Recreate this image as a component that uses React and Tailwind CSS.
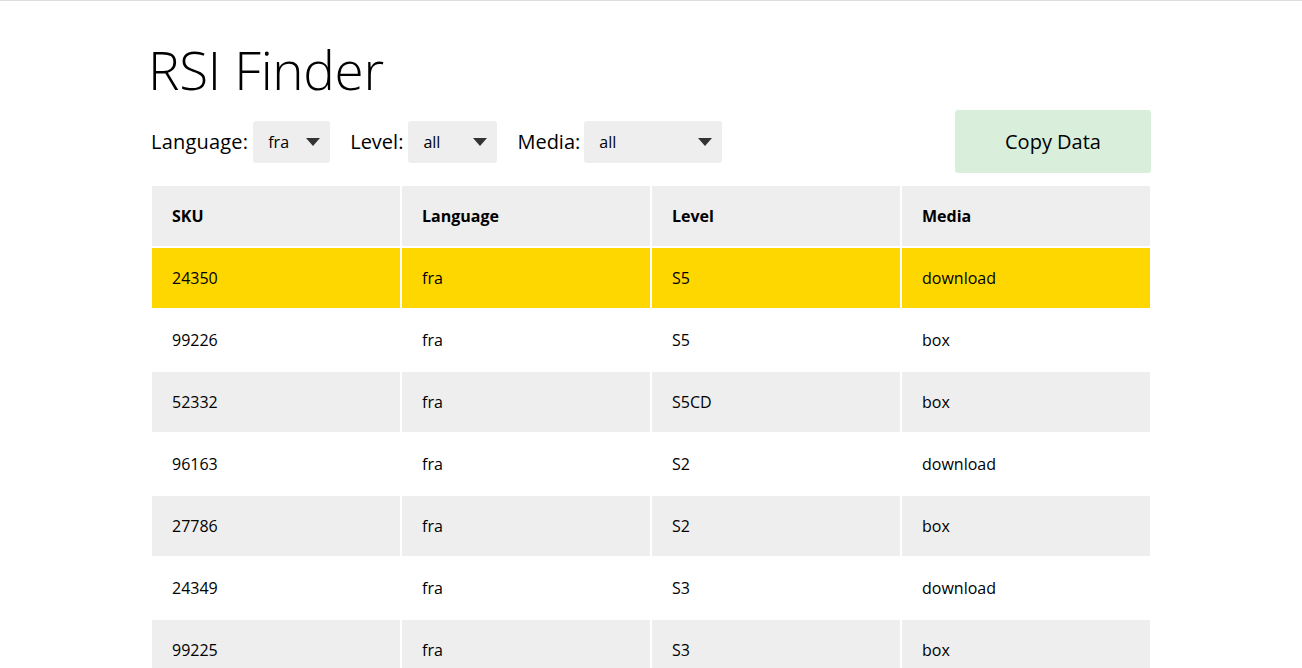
import { useState } from 'react';

const ROWS = [
  { sku: '24350', language: 'fra', level: 'S5', media: 'download' },
  { sku: '99226', language: 'fra', level: 'S5', media: 'box' },
  { sku: '52332', language: 'fra', level: 'S5CD', media: 'box' },
  { sku: '96163', language: 'fra', level: 'S2', media: 'download' },
  { sku: '27786', language: 'fra', level: 'S2', media: 'box' },
  { sku: '24349', language: 'fra', level: 'S3', media: 'download' },
  { sku: '99225', language: 'fra', level: 'S3', media: 'box' },
  { sku: '27787', language: 'fra', level: 'S4', media: 'box' },
];

function Select({ value, width }) {
  return (
    <div className={`relative flex items-center h-[42px] rounded-[3px] bg-[#eeeeee] pl-[15px] text-[16px] ${width}`}>
      <span>{value}</span>
      <svg className="absolute right-[10px] top-[17px]" width="14" height="8" viewBox="0 0 14 8">
        <path d="M0 0 H14 L7 8 Z" fill="#333" />
      </svg>
    </div>
  );
}

export default function App() {
  const [selected] = useState('24350');

  return (
    <div className="min-h-screen bg-white border-t border-[#dddddd] text-black" style={{ fontFamily: '"Open Sans", "Liberation Sans", sans-serif' }}>
      <div className="w-[1002px] mx-auto pt-[33px]">
        <h1 className="text-[53px] font-light leading-[72px] -ml-[2px] tracking-[-0.3px]">RSI Finder</h1>

        <div className="flex items-center mt-[4px] ml-[1px] h-[64px]">
          <span className="text-[20px] tracking-[0.2px]">Language:</span>
          <div className="ml-[5px]"><Select value="fra" width="w-[77px]" /></div>
          <span className="ml-[20px] text-[20px]">Level:</span>
          <div className="ml-[5px]"><Select value="all" width="w-[89px]" /></div>
          <span className="ml-[20px] text-[20px]">Media:</span>
          <div className="ml-[4px]"><Select value="all" width="w-[138px]" /></div>
          <button className="ml-auto mr-[1px] -mt-[1px] w-[196px] h-[63px] rounded-[3px] bg-[#d9eedb] text-[20px]">Copy Data</button>
        </div>

        <table className="w-full mt-[10px] border-separate border-spacing-[2px] text-[16px] text-left">
          <thead>
            <tr className="bg-[#eeeeee]">
              <th className="h-[60px] w-1/4 px-[20px] font-bold">SKU</th>
              <th className="h-[60px] w-1/4 px-[20px] font-bold">Language</th>
              <th className="h-[60px] w-1/4 px-[20px] font-bold">Level</th>
              <th className="h-[60px] w-1/4 px-[20px] font-bold">Media</th>
            </tr>
          </thead>
          <tbody>
            {ROWS.map((r, i) => (
              <tr
                key={r.sku}
                className={r.sku === selected ? 'bg-[#ffd700]' : i % 2 === 0 ? 'bg-[#eeeeee]' : 'bg-white'}
              >
                <td className="h-[60px] px-[20px]">{r.sku}</td>
                <td className="h-[60px] px-[20px]">{r.language}</td>
                <td className="h-[60px] px-[20px]">{r.level}</td>
                <td className="h-[60px] px-[20px]">{r.media}</td>
              </tr>
            ))}
          </tbody>
        </table>
      </div>
    </div>
  );
}
